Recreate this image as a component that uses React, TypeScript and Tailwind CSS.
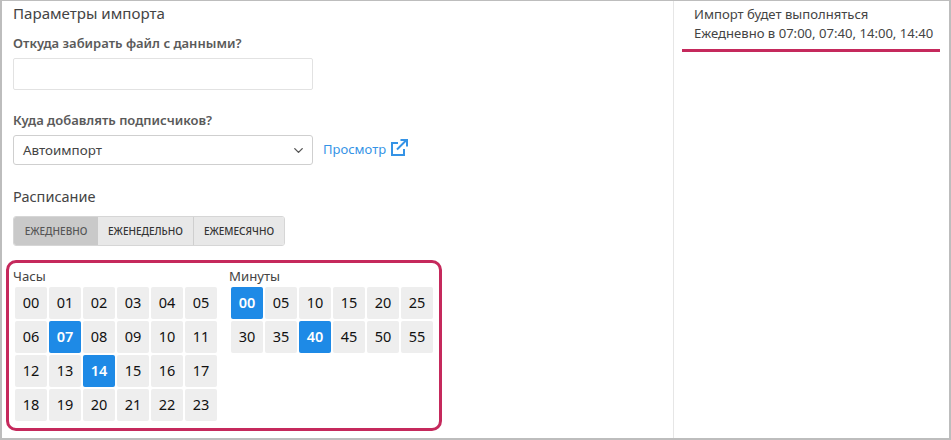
import React from 'react';
import { ChevronDown } from 'lucide-react';

const hours = ['00', '01', '02', '03', '04', '05', '06', '07', '08', '09', '10', '11', '12', '13', '14', '15', '16', '17', '18', '19', '20', '21', '22', '23'];
const minutes = ['00', '05', '10', '15', '20', '25', '30', '35', '40', '45', '50', '55'];

const TimeGrid = ({ label, items, active }: { label: string; items: string[]; active: string[] }) => (
  <div className="w-[204px]">
    <div className="h-[22px] text-[13.2px] leading-[22px] text-[#444]">{label}</div>
    <div className="ml-[2px] grid grid-cols-[repeat(6,32px)] gap-[2px]">
      {items.map((item) => (
        <div
          key={item}
          className={`flex h-[32px] items-center justify-center rounded-[2px] text-[14.5px] ${
            active.includes(item) ? 'bg-[#1e8ae6] font-semibold text-white' : 'bg-[#eeeeee] text-[#111]'
          }`}
        >
          {item}
        </div>
      ))}
    </div>
  </div>
);

export default function App() {
  return (
    <div
      className="flex h-[440px] w-[951px] overflow-hidden border-t border-r-2 border-b-2 border-l-2 border-[#bdbdbd] bg-white text-[#444]"
      style={{ fontFamily: '"Noto Sans", "Open Sans", sans-serif' }}
    >
      <div className="w-[672px] border-r border-[#e6e6e6] pl-[11px]">
        <h2 className="h-[24px] text-[15.1px] leading-[24px] text-[#444]">Параметры импорта</h2>

        <label className="mt-[8px] block h-[20px] text-[13px] leading-[20px] font-semibold text-[#5a5a5a]">Откуда забирать файл с данными?</label>
        <div className="mt-[5px] h-[32px] w-[300px] rounded-[2px] border border-[#e2e2e2] bg-white" />

        <label className="mt-[20px] block h-[20px] text-[13px] leading-[20px] font-semibold text-[#5a5a5a]">Куда добавлять подписчиков?</label>
        <div className="mt-[5px] flex items-center">
          <div className="flex h-[30px] w-[300px] items-center justify-between rounded-[3px] border border-[#cfcfcf] pr-[6px] pl-[9px] text-[13.4px] text-[#444]">
            <span>Автоимпорт</span>
            <ChevronDown className="h-[15px] w-[15px] text-[#555]" strokeWidth={2.2} />
          </div>
          <a className="ml-[10px] flex items-center text-[13px] text-[#3593e6]">
            Просмотр
            <svg className="mb-[6px] ml-[4px] h-[18px] w-[18px]" viewBox="0 0 18 18" fill="none" stroke="#3593e6" strokeWidth="2">
              <path d="M8 5H2v12h12v-6" />
              <path d="M7 11.5 16 2.5" />
              <path d="M10.5 2h6.5v6.5" />
            </svg>
          </a>
        </div>

        <h3 className="mt-[19px] h-[24px] text-[14.5px] leading-[24px] text-[#444]">Расписание</h3>
        <div className="mt-[8px] flex h-[30px] w-[272px] overflow-hidden rounded-[3px] border border-[#d6d6d6] text-[10px] font-medium">
          <div className="flex w-[84px] items-center justify-center bg-[#c9c9c9] text-[#555]">ЕЖЕДНЕВНО</div>
          <div className="flex w-[96px] items-center justify-center border-r border-[#cfcfcf] bg-[#e8e8e8] text-[#333]">ЕЖЕНЕДЕЛЬНО</div>
          <div className="flex flex-1 items-center justify-center bg-[#e8e8e8] text-[#333]">ЕЖЕМЕСЯЧНО</div>
        </div>

        <div className="mt-[14px] -ml-[7px] flex h-[171px] w-[436px] gap-[12px] rounded-[10px] border-[3px] border-[#c5295c] pt-[2px] pl-[4px]">
          <TimeGrid label="Часы" items={hours} active={['07', '14']} />
          <TimeGrid label="Минуты" items={minutes} active={['00', '40']} />
        </div>
      </div>

      <div className="flex-1 pt-[4px] pl-[8px]">
        <div className="w-[258px] border-b-[3px] border-[#c5295c] pb-[6px] pl-[12px] text-[13.1px] leading-[19px] text-[#444]">
          <div>Импорт будет выполняться</div>
          <div>Ежедневно в 07:00, 07:40, 14:00, 14:40</div>
        </div>
      </div>
    </div>
  );
}
